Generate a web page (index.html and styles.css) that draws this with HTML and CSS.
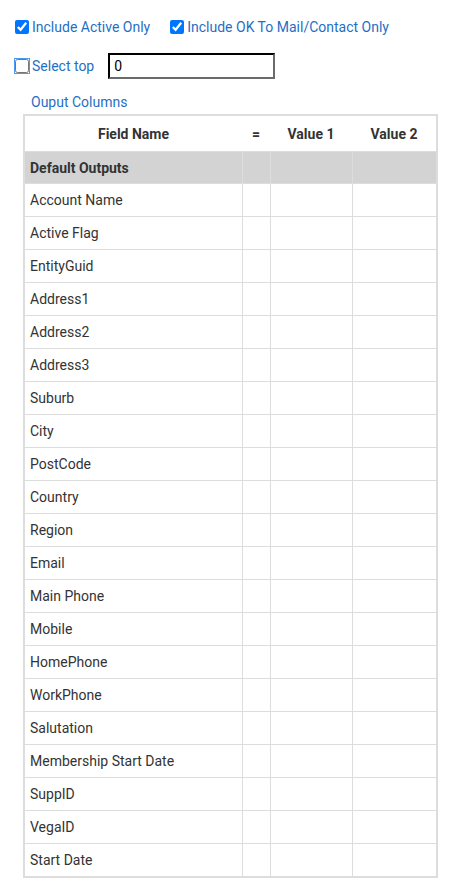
FILE: index.html
```html
<!DOCTYPE html>
<html lang="en">
<head>
    <meta charset="UTF-8">
    <meta name="viewport" content="width=device-width, initial-scale=1.0">
    <title>Output Columns</title>
    <link rel="stylesheet" href="styles.css">
</head>
<body>

<div class="filters">
    <div class="filter-row">
        <label class="check"><input type="checkbox" checked> Include Active Only</label>
        <label class="check"><input type="checkbox" checked> Include OK To Mail/Contact Only</label>
    </div>
    <div class="filter-row">
        <label class="check"><input type="checkbox" class="focused"> Select top</label>
        <input type="text" class="top-input" value="0">
    </div>
</div>

<div class="outputs">
    <div class="outputs-title">Ouput Columns</div>
    <table class="output-table">
        <colgroup>
            <col class="col-field">
            <col class="col-eq">
            <col class="col-val">
            <col class="col-val2">
        </colgroup>
        <thead>
            <tr>
                <th>Field Name</th>
                <th>=</th>
                <th>Value 1</th>
                <th>Value 2</th>
            </tr>
        </thead>
        <tbody>
            <tr class="group-row"><td>Default Outputs</td><td></td><td></td><td></td></tr>
            <tr><td>Account Name</td><td></td><td></td><td></td></tr>
            <tr><td>Active Flag</td><td></td><td></td><td></td></tr>
            <tr><td>EntityGuid</td><td></td><td></td><td></td></tr>
            <tr><td>Address1</td><td></td><td></td><td></td></tr>
            <tr><td>Address2</td><td></td><td></td><td></td></tr>
            <tr><td>Address3</td><td></td><td></td><td></td></tr>
            <tr><td>Suburb</td><td></td><td></td><td></td></tr>
            <tr><td>City</td><td></td><td></td><td></td></tr>
            <tr><td>PostCode</td><td></td><td></td><td></td></tr>
            <tr><td>Country</td><td></td><td></td><td></td></tr>
            <tr><td>Region</td><td></td><td></td><td></td></tr>
            <tr><td>Email</td><td></td><td></td><td></td></tr>
            <tr><td>Main Phone</td><td></td><td></td><td></td></tr>
            <tr><td>Mobile</td><td></td><td></td><td></td></tr>
            <tr><td>HomePhone</td><td></td><td></td><td></td></tr>
            <tr><td>WorkPhone</td><td></td><td></td><td></td></tr>
            <tr><td>Salutation</td><td></td><td></td><td></td></tr>
            <tr><td>Membership Start Date</td><td></td><td></td><td></td></tr>
            <tr><td>SuppID</td><td></td><td></td><td></td></tr>
            <tr><td>VegaID</td><td></td><td></td><td></td></tr>
            <tr><td>Start Date</td><td></td><td></td><td></td></tr>
        </tbody>
    </table>
</div>

</body>
</html>
```

FILE: styles.css
```css
body {
    font-family: Roboto, Arial, sans-serif;
    font-size: 14px;
    color: #333;
    background: #fff;
    margin: 0;
    padding: 0;
}
.filters {
    padding: 17px 15px 0;
}
.filter-row {
    display: flex;
    align-items: center;
    height: 20px;
}
.filter-row + .filter-row {
    margin-top: 16px;
    height: 26px;
}
.check {
    display: flex;
    align-items: center;
    color: #1f6fc5;
    margin-right: 20px;
    cursor: pointer;
}
.check input {
    width: 14px;
    height: 14px;
    margin: 0 3px 0 0;
}
.check input.focused {
    outline: 1px solid #4a9cf0;
    outline-offset: 0;
}
.top-input {
    width: 167px;
    height: 26px;
    box-sizing: border-box;
    margin-left: -6px;
    padding: 0 4px;
    border: 2px inset #767676;
    border-color: #1a1a1a #6b6b6b #6b6b6b #1a1a1a;
    font-family: Roboto, Arial, sans-serif;
    font-size: 14px;
    color: #000;
    outline: none;
}
.outputs {
    padding: 15px 21px 0 23px;
}
.outputs-title {
    color: #1f6fc5;
    font-size: 14px;
    line-height: 16px;
    padding-left: 8px;
    margin-bottom: 4px;
}
.output-table {
    width: 413px;
    table-layout: fixed;
    border-collapse: collapse;
    border: 2px solid #ddd;
}
.col-field { width: 218px; }
.col-eq { width: 28px; }
.col-val { width: 82px; }
.col-val2 { width: 85px; }
.output-table th {
    height: 35px;
    padding: 0 5px;
    font-weight: bold;
    text-align: center;
    color: #333;
}
.output-table td {
    height: 32px;
    padding: 0 5px;
    border: 1px solid #ddd;
    color: #333;
}
.output-table .group-row td {
    background: #d3d3d3;
    font-weight: bold;
    height: 31px;
}
```
